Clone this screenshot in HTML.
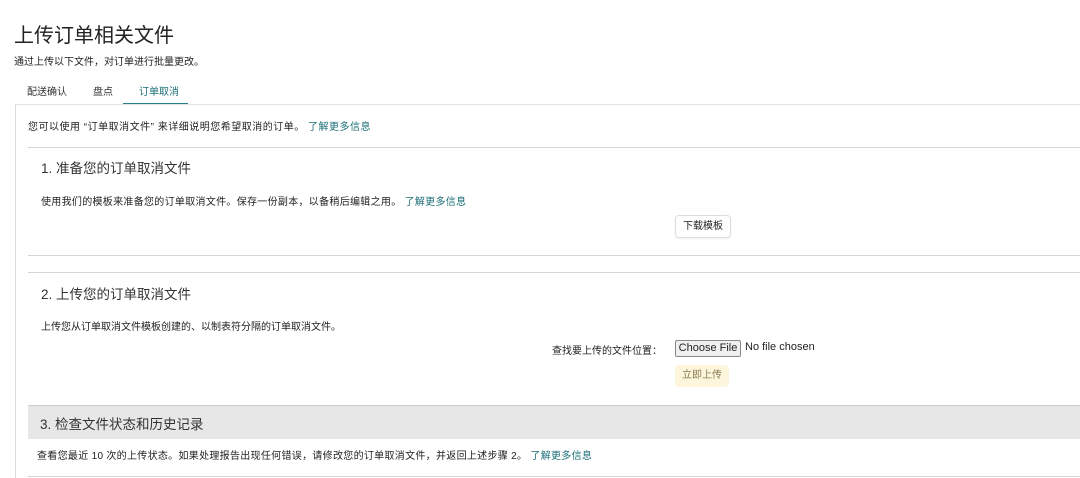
<!DOCTYPE html>
<html><head><meta charset="utf-8"><style>
body{margin:0;width:1080px;height:478px;background:#fff;position:relative;overflow:hidden;font-family:"Liberation Sans","Noto Sans CJK SC",sans-serif;color:#222}
.a{position:absolute;white-space:nowrap}
.s{font-size:10px}
.l{color:#1b6e77}
.h{font-size:13.5px;color:#333}
.hr{position:absolute;left:28px;right:0;height:1px;background:#d5d5d5}
</style></head><body>
<div class="a" style="left:14px;top:19px;font-size:20px;color:#222">上传订单相关文件</div>
<div class="a s" style="left:14px;top:53px">通过上传以下文件，对订单进行批量更改。</div>
<div class="a s" style="left:27px;top:83px;color:#333">配送确认</div>
<div class="a s" style="left:93px;top:83px;color:#333">盘点</div>
<div class="a s" style="left:139px;top:83px;color:#1b6e77">订单取消</div>
<div class="a" style="left:123px;top:103px;width:65px;height:2px;background:#2a7e86"></div>
<div class="a" style="left:15px;top:104px;width:1px;height:374px;background:#ddd"></div>
<div class="a" style="left:15px;top:104px;right:0;height:1px;background:#e4e4e4"></div>
<div class="a s" style="left:28px;top:118px;letter-spacing:0.5px">您可以使用 “订单取消文件” 来详细说明您希望取消的订单。 <span class="l">了解更多信息</span></div>
<div class="hr" style="top:147px"></div>
<div class="a h" style="left:41px;top:157px">1. 准备您的订单取消文件</div>
<div class="a s" style="left:41px;top:193px;letter-spacing:0.3px">使用我们的模板来准备您的订单取消文件。保存一份副本，以备稍后编辑之用。 <span class="l">了解更多信息</span></div>
<div class="a s" style="left:675px;top:215px;width:54px;height:21px;border:1px solid #ddd;border-radius:4px;line-height:21px;text-align:center;box-shadow:0 1px 2px #eee">下载模板</div>
<div class="hr" style="top:255px"></div>
<div class="hr" style="top:272px"></div>
<div class="a h" style="left:41px;top:283px">2. 上传您的订单取消文件</div>
<div class="a s" style="left:41px;top:318px">上传您从订单取消文件模板创建的、以制表符分隔的订单取消文件。</div>
<div class="a s" style="left:552px;top:342px">查找要上传的文件位置：</div>
<div class="a" style="left:675px;top:340px;width:64px;height:15px;border:1px solid #888;background:#efefef;font-size:11px;line-height:15px;text-align:center;border-radius:2px">Choose File</div>
<div class="a" style="left:745px;top:341px;font-size:11px">No file chosen</div>
<div class="a s" style="left:675px;top:365px;width:54px;height:22px;background:#fdf6dc;border-radius:4px;line-height:22px;text-align:center;color:#8a7a50">立即上传</div>
<div class="a" style="left:28px;top:405px;right:0;height:33px;background:#e7e7e7;border-top:1px solid #ccc"></div>
<div class="a h" style="left:40px;top:413px">3. 检查文件状态和历史记录</div>
<div class="a s" style="left:37px;top:447px;letter-spacing:0.3px">查看您最近 10 次的上传状态。如果处理报告出现任何错误，请修改您的订单取消文件，并返回上述步骤 2。 <span class="l">了解更多信息</span></div>
<div class="hr" style="top:476px"></div>
</body></html>
